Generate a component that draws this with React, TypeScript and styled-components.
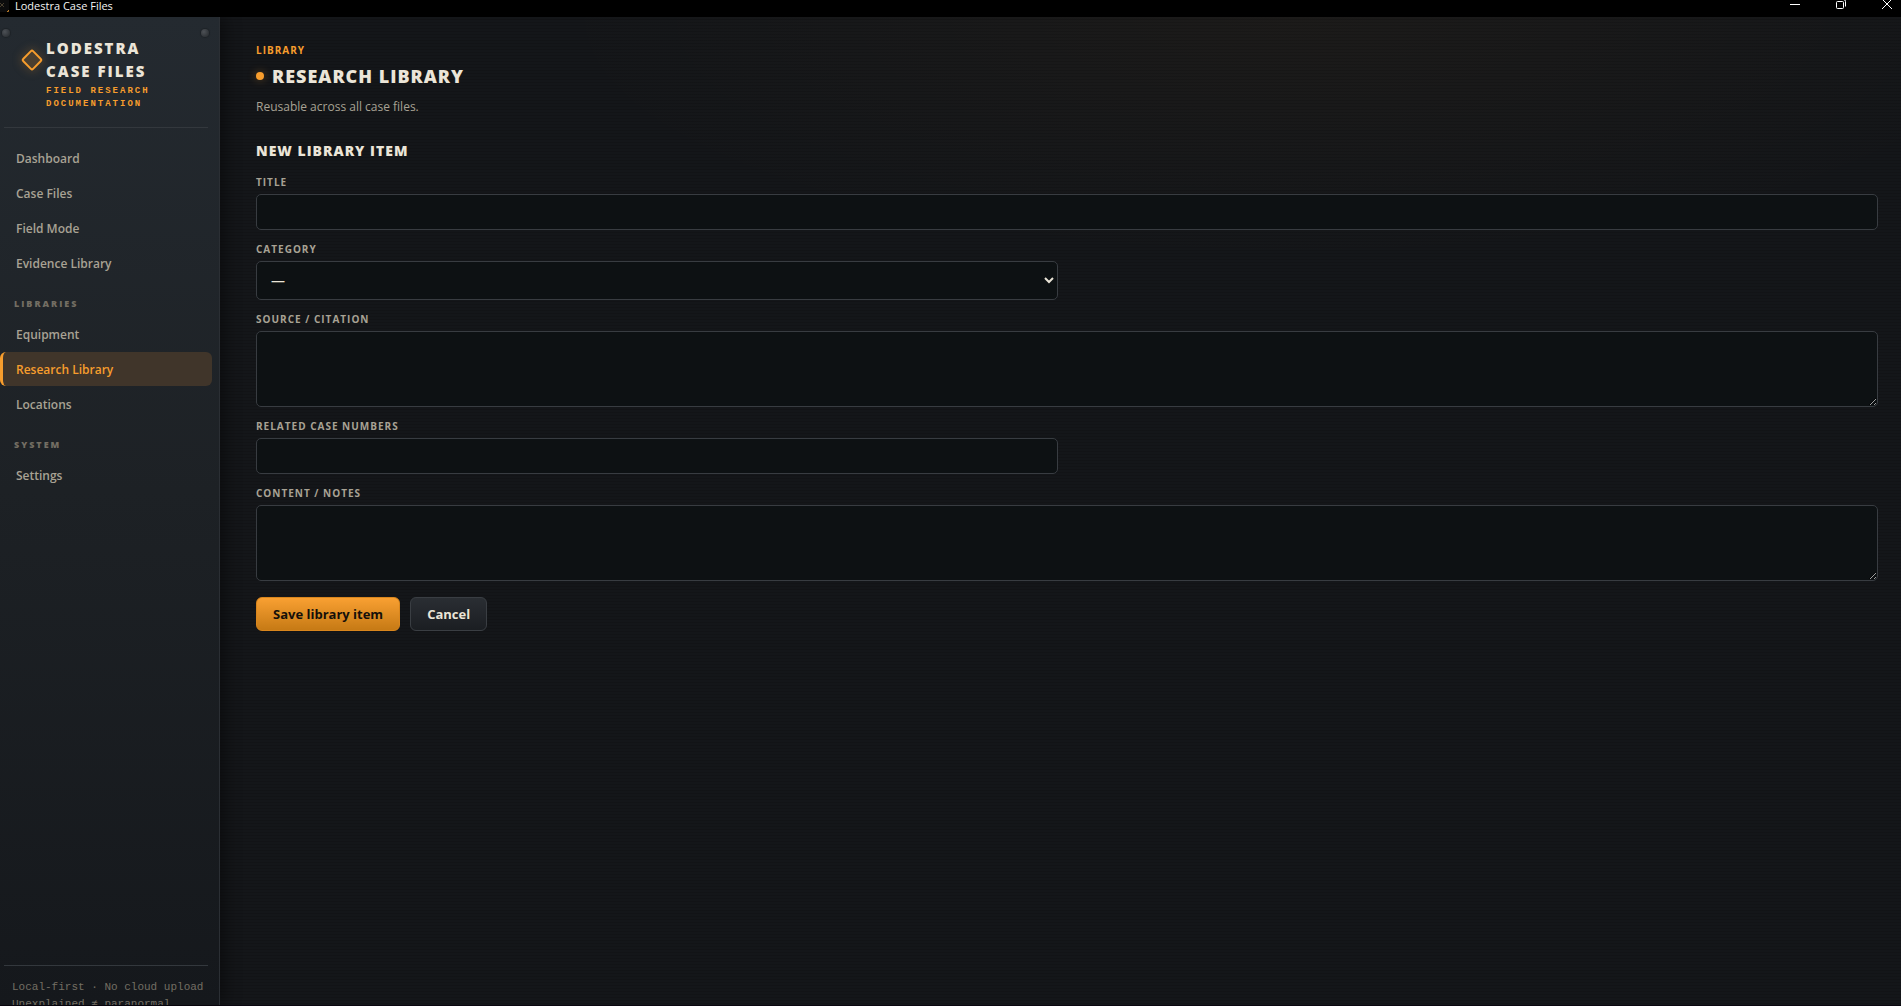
import React from "react";
import styled, { createGlobalStyle } from "styled-components";

const sans = `"Open Sans", "Noto Sans", sans-serif`;
const mono = `"Liberation Mono", "DejaVu Sans Mono", monospace`;

const amber = "#f79d2d";
const cream = "#ebe5d8";
const muted = "#a8a294";
const faint = "#736e63";
const line = "#33383d";

const GlobalStyle = createGlobalStyle`
  *, *::before, *::after { box-sizing: border-box; }
  html, body, #root { height: 100%; }
  body {
    margin: 0;
    overflow: hidden;
    background: #000;
    color: ${cream};
    font-family: ${sans};
    font-size: 12px;
  }
  h1, h2, p { margin: 0; }
`;

const Window = styled.div`
  height: 100%;
  display: flex;
  flex-direction: column;
`;

const TitleBar = styled.header`
  flex: 0 0 17px;
  display: flex;
  align-items: flex-start;
  justify-content: space-between;
  background: #000;
`;

const AppName = styled.div`
  display: flex;
  gap: 6px;
  color: #fff;
  font-size: 11px;
  line-height: 12px;
`;

const WindowButtons = styled.div`
  display: flex;
  gap: 34px;
  padding-right: 8px;
`;

const WindowButton = styled.button`
  display: block;
  width: 12px;
  height: 12px;
  padding: 0;
  border: 0;
  background: none;
  color: #fff;

  svg { display: block; }
`;

const Body = styled.div`
  flex: 1;
  min-height: 0;
  display: flex;
  border-bottom: 1px solid #0a0610;
`;

const Sidebar = styled.aside`
  position: relative;
  flex: 0 0 220px;
  min-width: 0;
  display: flex;
  flex-direction: column;
  border-right: 1px solid #2b2f34;
  background: linear-gradient(180deg, #242a30 0%, #1d2125 48%, #15181c 100%);
  box-shadow: 4px 0 16px rgba(0, 0, 0, 0.45);
`;

const Rivet = styled.span<{ $side: "left" | "right" }>`
  position: absolute;
  top: 12px;
  ${(p) => (p.$side === "left" ? "left: 2px;" : "right: 10px;")}
  width: 8px;
  height: 8px;
  border-radius: 50%;
  background: radial-gradient(circle at 35% 35%, #4d5156, #2b2f33 80%);
  box-shadow: 0 0 1px 1px rgba(0, 0, 0, 0.2);
`;

const Brand = styled.div`
  display: flex;
  align-items: flex-start;
  margin: 0 11px 0 4px;
  padding: 20px 0 16px 16px;
  border-bottom: 1px solid ${line};
`;

const BrandMark = styled.svg`
  flex: none;
  width: 24px;
  height: 24px;
  margin: 11px 2px 0 0;
  overflow: visible;
  filter: drop-shadow(0 0 5px rgba(247, 157, 45, 0.5));
`;

const BrandName = styled.div`
  font-size: 15px;
  font-weight: 800;
  line-height: 23px;
  letter-spacing: 2px;
  text-transform: uppercase;
`;

const BrandTag = styled.div`
  margin-top: 2px;
  color: ${amber};
  font-family: ${mono};
  font-size: 9px;
  font-weight: 700;
  line-height: 13px;
  letter-spacing: 2px;
  text-transform: uppercase;
`;

const Nav = styled.nav`
  flex: 1;
  display: flex;
  flex-direction: column;
  gap: 1px;
  padding: 13px 7px 0 0;
`;

const NavLink = styled.a<{ $active?: boolean }>`
  display: block;
  padding: 2px 13px 0;
  border-left: 3px solid ${(p) => (p.$active ? amber : "transparent")};
  border-radius: 6px;
  background: ${(p) => (p.$active ? "#40352a" : "transparent")};
  color: ${(p) => (p.$active ? amber : muted)};
  font-weight: 600;
  line-height: 32px;
  text-decoration: none;
`;

const NavHeading = styled.h2`
  padding: 16px 14px 5px;
  color: ${faint};
  font-size: 9px;
  font-weight: 800;
  line-height: 14px;
  letter-spacing: 2px;
  text-transform: uppercase;
`;

const SidebarFooter = styled.footer`
  flex: 0 0 40px;
  margin: 0 11px 0 4px;
  padding: 13px 8px 0;
  overflow: hidden;
  border-top: 1px solid ${line};
  color: ${faint};
  font-family: ${mono};
  font-size: 11px;
  line-height: 17px;
  white-space: nowrap;
`;

const Main = styled.main`
  flex: 1;
  min-width: 0;
  padding: 26px 23px 24px 36px;
  background:
    repeating-linear-gradient(to bottom, transparent 0 2px, rgba(0, 0, 0, 0.12) 2px 3px),
    radial-gradient(ellipse 45% 25% at 64% 0, rgba(247, 157, 45, 0.035), transparent),
    #141619;
`;

const Eyebrow = styled.p`
  color: ${amber};
  font-size: 10px;
  font-weight: 700;
  line-height: 14px;
  letter-spacing: 1px;
  text-transform: uppercase;
`;

const PageTitle = styled.h1`
  display: flex;
  align-items: center;
  gap: 8px;
  margin-top: 6px;
  font-size: 18px;
  font-weight: 800;
  line-height: 26px;
  letter-spacing: 1px;
  text-transform: uppercase;

  &::before {
    content: "";
    width: 8px;
    height: 8px;
    border-radius: 50%;
    background: ${amber};
    box-shadow: 0 0 8px rgba(247, 157, 45, 0.35);
  }
`;

const Lead = styled.p`
  margin-top: 8px;
  color: ${muted};
  line-height: 20px;
`;

const SectionTitle = styled.h2`
  margin: 24px 0 14px;
  font-size: 14px;
  font-weight: 800;
  line-height: 20px;
  letter-spacing: 1px;
  text-transform: uppercase;
`;

const Form = styled.form`
  display: grid;
  grid-template-columns: 1fr 1fr;
  gap: 12px 18px;
`;

const Field = styled.div<{ $wide?: boolean }>`
  grid-column: ${(p) => (p.$wide ? "1 / -1" : "1")};
  display: flex;
  flex-direction: column;
  gap: 5px;
`;

const Label = styled.label`
  color: ${muted};
  font-size: 10px;
  font-weight: 700;
  line-height: 14px;
  letter-spacing: 1px;
  text-transform: uppercase;
`;

const control = `
  width: 100%;
  border: 1px solid #383c41;
  border-radius: 5px;
  outline: none;
  background-color: #0d1113;
  color: ${cream};
  font-family: ${sans};
  font-size: 14px;
`;

const Input = styled.input`
  ${control}
  height: 36px;
  padding: 0 12px;
`;

const Select = styled.select`
  ${control}
  height: 39px;
  padding: 0 0 0 10px;
`;

const TextArea = styled.textarea`
  ${control}
  display: block;
  height: 76px;
  padding: 8px 12px;
  resize: vertical;
  color-scheme: dark;
`;

const Actions = styled.div`
  grid-column: 1 / -1;
  display: flex;
  gap: 10px;
  margin-top: 4px;
`;

const Button = styled.button<{ $primary?: boolean }>`
  height: 34px;
  padding: 0 16px;
  border: 1px solid ${(p) => (p.$primary ? "#d9861d" : "#3a3e43")};
  border-radius: 6px;
  background: ${(p) =>
    p.$primary
      ? "linear-gradient(180deg, #f9a032, #c67a15)"
      : "linear-gradient(180deg, #2a2e33, #1b1e22)"};
  color: ${(p) => (p.$primary ? "#15100a" : cream)};
  font-family: ${sans};
  font-size: 13px;
  font-weight: 700;
`;

const mainLinks = ["Dashboard", "Case Files", "Field Mode", "Evidence Library"];
const libraryLinks = ["Equipment", "Research Library", "Locations"];

function NavItem({ label, active }: { label: string; active?: boolean }) {
  return (
    <NavLink href="#" $active={active} aria-current={active ? "page" : undefined}>
      {label}
    </NavLink>
  );
}

export default function App() {
  return (
    <>
      <GlobalStyle />
      <Window>
        <TitleBar>
          <AppName>
            <svg width="9" height="12" viewBox="0 0 9 12" aria-hidden="true">
              <rect width="9" height="12" fill="#0d0d0e" />
              <path d="M0 3l4 4M4 3L0 7" stroke="#4a4030" />
              <path d="M7 11.5h1.5V10" stroke="#c9852c" fill="none" />
            </svg>
            Lodestra Case Files
          </AppName>
          <WindowButtons>
            <WindowButton aria-label="Minimize">
              <svg width="12" height="12" viewBox="0 0 12 12">
                <path d="M1 4.5h10" stroke="currentColor" />
              </svg>
            </WindowButton>
            <WindowButton aria-label="Restore">
              <svg width="12" height="12" viewBox="0 0 12 12" fill="none" stroke="currentColor">
                <rect x="1.5" y="1.5" width="7" height="7" rx="1" />
                <path d="M3.5 -0.5h5q2 0 2 2v5" />
              </svg>
            </WindowButton>
            <WindowButton aria-label="Close">
              <svg width="12" height="12" viewBox="0 0 12 12">
                <path d="M1 -1l10 10M11 -1L1 9" stroke="currentColor" />
              </svg>
            </WindowButton>
          </WindowButtons>
        </TitleBar>
        <Body>
          <Sidebar>
            <Rivet $side="left" />
            <Rivet $side="right" />
            <Brand>
              <BrandMark viewBox="0 0 24 24" aria-hidden="true">
                <rect
                  x="5"
                  y="5"
                  width="14"
                  height="14"
                  rx="1.5"
                  transform="rotate(45 12 12)"
                  fill="rgba(247,157,45,0.08)"
                  stroke={amber}
                  strokeWidth="2"
                />
              </BrandMark>
              <div>
                <BrandName>
                  Lodestra
                  <br />
                  Case Files
                </BrandName>
                <BrandTag>
                  Field Research
                  <br />
                  Documentation
                </BrandTag>
              </div>
            </Brand>
            <Nav>
              {mainLinks.map((l) => (
                <NavItem key={l} label={l} />
              ))}
              <NavHeading>Libraries</NavHeading>
              {libraryLinks.map((l) => (
                <NavItem key={l} label={l} active={l === "Research Library"} />
              ))}
              <NavHeading>System</NavHeading>
              <NavItem label="Settings" />
            </Nav>
            <SidebarFooter>
              Local-first · No cloud upload
              <br />
              Unexplained ≠ paranormal
            </SidebarFooter>
          </Sidebar>
          <Main>
            <Eyebrow>Library</Eyebrow>
            <PageTitle>Research Library</PageTitle>
            <Lead>Reusable across all case files.</Lead>
            <SectionTitle>New library item</SectionTitle>
            <Form onSubmit={(e) => e.preventDefault()}>
              <Field $wide>
                <Label htmlFor="title">Title</Label>
                <Input id="title" type="text" />
              </Field>
              <Field>
                <Label htmlFor="category">Category</Label>
                <Select id="category">
                  <option>—</option>
                </Select>
              </Field>
              <Field $wide>
                <Label htmlFor="source">Source / Citation</Label>
                <TextArea id="source" />
              </Field>
              <Field>
                <Label htmlFor="cases">Related case numbers</Label>
                <Input id="cases" type="text" />
              </Field>
              <Field $wide>
                <Label htmlFor="notes">Content / Notes</Label>
                <TextArea id="notes" />
              </Field>
              <Actions>
                <Button type="submit" $primary>
                  Save library item
                </Button>
                <Button type="button">Cancel</Button>
              </Actions>
            </Form>
          </Main>
        </Body>
      </Window>
    </>
  );
}
